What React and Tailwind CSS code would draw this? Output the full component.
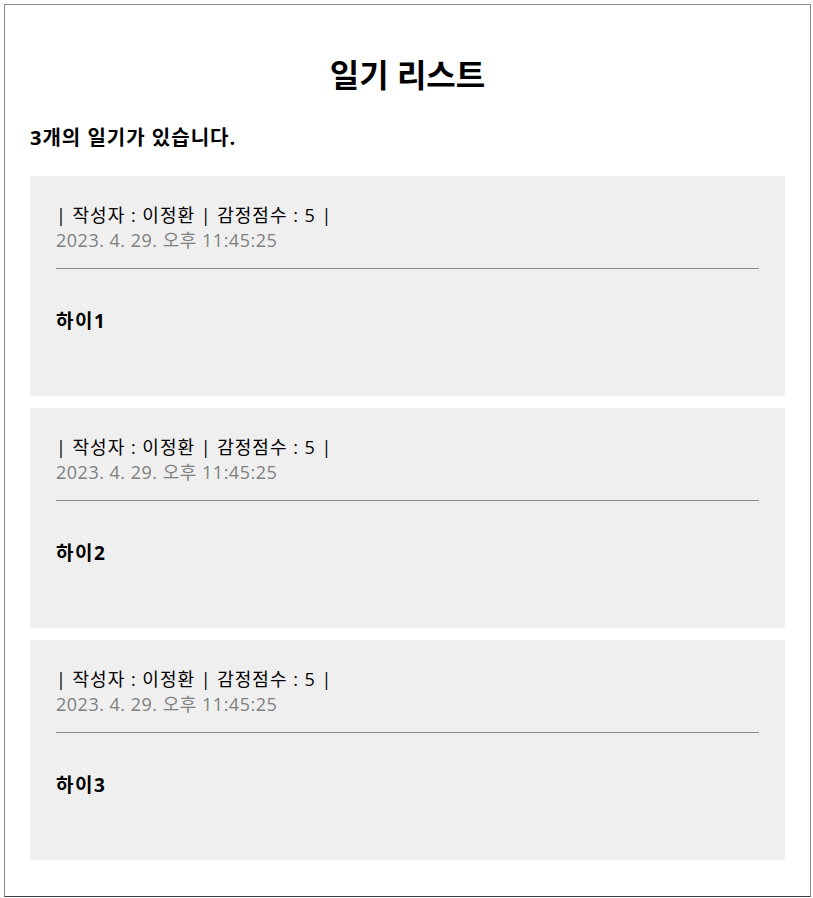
import React from 'react';

const diaries = [
    { id: 1, author: '이정환', emotion: 5, content: '하이1', created: '2023. 4. 29. 오후 11:45:25' },
    { id: 2, author: '이정환', emotion: 5, content: '하이2', created: '2023. 4. 29. 오후 11:45:25' },
    { id: 3, author: '이정환', emotion: 5, content: '하이3', created: '2023. 4. 29. 오후 11:45:25' },
];

const DiaryItem = ({ author, emotion, content, created }) => (
    <div className="bg-[#efefef] h-[220px] pt-[27px] px-[26px]">
        <div className="text-[18px] leading-[25px]">
            <div className="text-black tracking-[1px]">| 작성자 : {author} | 감정점수 : {emotion} |</div>
            <div className="text-[#808080] tracking-[0.5px]">{created}</div>
        </div>
        <div className="mt-[15px] border-t border-[#888888]" />
        <div className="mt-[40px] text-[19px] leading-[25px] font-bold tracking-[1.5px]">{content}</div>
    </div>
);

const App = () => {
    return (
        <div
            className="ml-1 mr-[2px] mt-1 h-[893px] border border-[#8a8a8a] border-b-[#3a3f4a] bg-white px-[25px] pt-[50px] text-black"
            style={{ fontFamily: '"Open Sans", "Noto Sans CJK KR", sans-serif' }}
        >
            <h2 className="text-center text-[32px] leading-[40px] font-bold">일기 리스트</h2>
            <h4 className="mt-[30px] text-[20px] leading-[25px] font-bold tracking-[1px]">{diaries.length}개의 일기가 있습니다.</h4>
            <div className="mt-[26px] flex flex-col gap-[12px]">
                {diaries.map((d) => (
                    <DiaryItem key={d.id} {...d} />
                ))}
            </div>
        </div>
    );
};

export default App;
